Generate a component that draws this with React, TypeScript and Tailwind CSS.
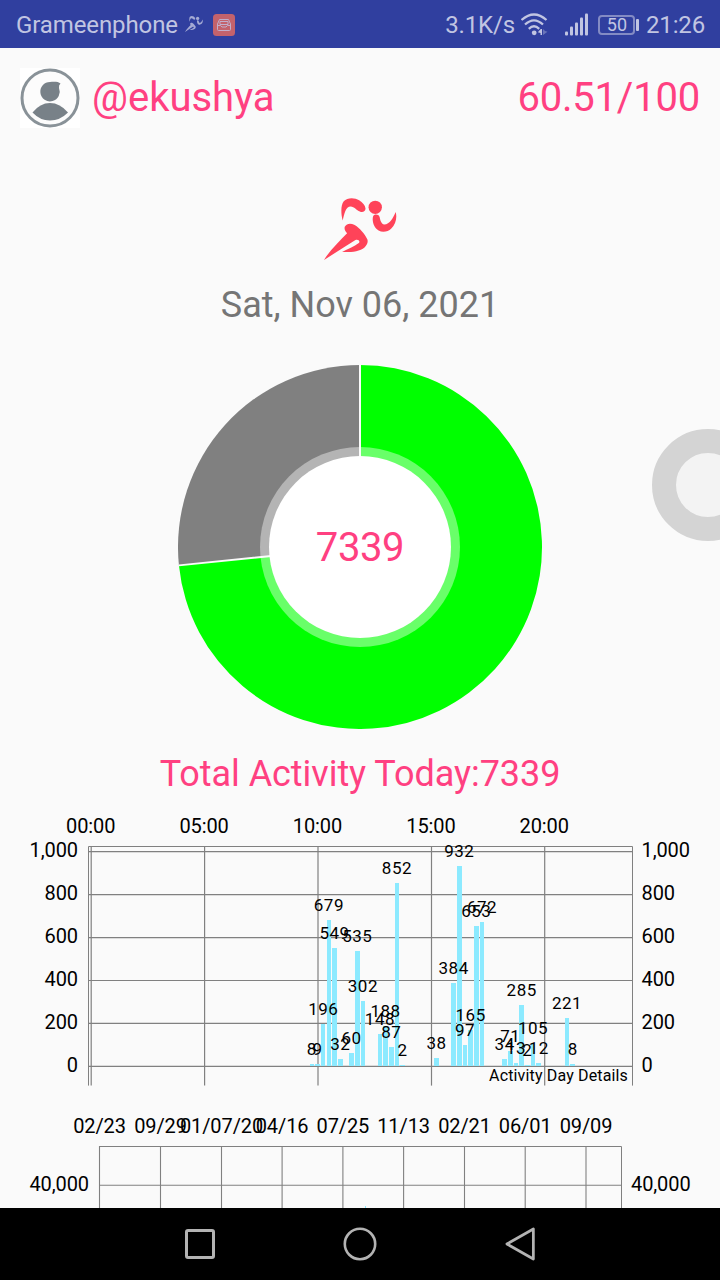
import React from 'react';

interface Bar {
  slot: number;
  value: number;
}

// one slot = 15 minutes, slot 0 = 00:00
const dayBars: Bar[] = [
  { slot: 39, value: 8 },
  { slot: 40, value: 9 },
  { slot: 41, value: 196 },
  { slot: 42, value: 679 },
  { slot: 43, value: 549 },
  { slot: 44, value: 32 },
  { slot: 46, value: 60 },
  { slot: 47, value: 535 },
  { slot: 48, value: 302 },
  { slot: 51, value: 148 },
  { slot: 52, value: 188 },
  { slot: 53, value: 87 },
  { slot: 54, value: 852 },
  { slot: 55, value: 2 },
  { slot: 61, value: 38 },
  { slot: 64, value: 384 },
  { slot: 65, value: 932 },
  { slot: 66, value: 97 },
  { slot: 67, value: 165 },
  { slot: 68, value: 653 },
  { slot: 69, value: 672 },
  { slot: 73, value: 34 },
  { slot: 74, value: 71 },
  { slot: 75, value: 13 },
  { slot: 76, value: 285 },
  { slot: 77, value: 2 },
  { slot: 78, value: 105 },
  { slot: 79, value: 12 },
  { slot: 84, value: 221 },
  { slot: 85, value: 8 },
];

const hourTicks = [
  { x: 91.2, label: '00:00' },
  { x: 204.6, label: '05:00' },
  { x: 318, label: '10:00' },
  { x: 431.5, label: '15:00' },
  { x: 544.7, label: '20:00' },
];

const stepTicks = [0, 200, 400, 600, 800, 1000];

const dateTicks = [
  { x: 99.5, label: '02/23' },
  { x: 160.5, label: '09/29' },
  { x: 221.5, label: '01/07/20' },
  { x: 282.1, label: '04/16' },
  { x: 342.9, label: '07/25' },
  { x: 403.6, label: '11/13' },
  { x: 464.5, label: '02/21' },
  { x: 525.2, label: '06/01' },
  { x: 586, label: '09/09' },
];

const ZERO_Y = 256.4;
const UNIT = 0.2147;

const barX = (slot: number) => 317.55 + (slot - 40) * 5.67;
const barTop = (value: number) => ZERO_Y - value * UNIT;

const Runner: React.FC<{ className: string }> = ({ className }) => (
  <svg viewBox="72 54 218 187" preserveAspectRatio="none" fill="currentColor" className={className}>
    <path d="M128 122C122 102 122 74 131 64C142 52 164 53 177 61C187 67 195 76 196 86C196 95 187 99 179 95C169 91 162 81 152 80C136 80 132 104 128 122Z" />
    <circle cx="225" cy="82" r="20" />
    <path d="M219 108C224 102 235 103 238 111C240 119 242 132 252 134C268 134 280 111 286 96C291 113 286 133 273 146C263 156 247 159 235 152C221 144 214 122 219 108Z" />
    <path d="M134 141C140 130 152 130 162 135C180 145 194 164 201 178C205 186 200 196 193 203C179 216 150 218 126 217C143 208 162 201 176 190C181 184 174 178 166 181L134 201L72 241C89 212 118 184 141 160C135 154 132 148 134 141Z" />
  </svg>
);

const StatusBar: React.FC = () => (
  <div className="h-12 bg-[#303f9f] text-[#c1c5e2] text-2xl leading-none flex items-center px-4">
    <span className="leading-[50px] mt-[2px] tracking-[-0.1px]">Grameenphone</span>
    <Runner className="w-[18px] h-4 ml-[7px] opacity-80" />
    <svg viewBox="0 0 22 22" className="w-[22px] h-[22px] ml-[10px] mt-[2px]">
      <rect width="22" height="22" rx="3.5" fill="#c3626c" />
      <g fill="none" stroke="#c1aecb" strokeWidth="1">
        <path d="M6.500 5.500H15.500L17.500 10V15.500Q17.500 16.500 16.500 16.500H5.500Q4.500 16.500 4.500 15.500V10Z" />
        <path d="M5 11.500H7.500L9 13H13L14.500 11.500H17M7 7.500H15V10.500H7Z" />
      </g>
    </svg>
    <span className="ml-auto leading-[50px] mt-[2px] tracking-[-0.15px]">3.1K/s</span>
    <svg viewBox="0 0 27 23" className="w-[27px] h-[23px] ml-[6px]">
      <g fill="none" stroke="currentColor" strokeWidth="2.3">
        <path d="M0.500 7Q13 -4 25.500 7" />
        <path d="M4 11.500Q13 3.200 22 11.500" />
        <path d="M7.800 15.800Q13 10.800 18.200 15.800" />
      </g>
      <circle cx="13.200" cy="19.800" r="2.400" fill="currentColor" />
      <path d="M21 16V22H19.500V20L16.800 19.200L19.800 16Z" fill="currentColor" />
      <path d="M22 16V22L26.500 18.700L24 18Z" fill="currentColor" opacity=".4" />
    </svg>
    <svg viewBox="0 0 24 23" className="w-6 h-[23px] ml-[17px]" fill="currentColor">
      <rect x="0" y="18.500" width="3" height="4" rx="1" />
      <rect x="5" y="13.500" width="3" height="9" rx="1" />
      <rect x="10" y="9.500" width="3" height="13" rx="1" />
      <rect x="15" y="4.500" width="3" height="18" rx="1" />
      <rect x="20" y="0.500" width="3" height="22" rx="1" />
    </svg>
    <div className="ml-[9px] mt-[2px] w-[37px] h-5 rounded-[4px] border-2 border-[#838bc4] flex items-center justify-center text-[18px] pl-px">
      50
    </div>
    <div className="ml-px mt-[2px] w-[3px] h-3 rounded-[1px] bg-[#c1c5e2]" />
    <span className="ml-[7px] mr-[-1px] leading-[50px] mt-[2px] tracking-[-0.15px]">21:26</span>
  </div>
);

const Avatar: React.FC = () => (
  <svg viewBox="0 0 60 60" className="w-[60px] h-[60px] bg-white">
    <circle cx="30" cy="30" r="28" fill="#fcfcfc" stroke="#899298" strokeWidth="3" />
    <path
      d="M40.500 15.500C38 13.200 33 13.700 30 14A9.700 9.700 0 1 0 39 20Q38.500 17 40.500 15.500Z"
      fill="#788188"
    />
    <path d="M12.500 44.500Q20 35 30 35Q40 35 48 44.500Q40 52.500 30 52.500Q20 52.500 12.500 44.500Z" fill="#788188" />
  </svg>
);

const GoalDonut: React.FC<{ steps: number; goal: number }> = ({ steps, goal }) => {
  const angle = (steps / goal) * 2 * Math.PI;
  const ex = 182 + 182 * Math.sin(angle);
  const ey = 182 - 182 * Math.cos(angle);

  return (
    <svg viewBox="0 0 364 364" className="w-[364px] h-[364px]">
      <path d={`M182 182V0A182 182 0 1 1 ${ex} ${ey}Z`} fill="#00ff00" />
      <path d={`M182 182L${ex} ${ey}A182 182 0 0 1 182 0Z`} fill="#808080" />
      <path d={`M182 0V182L${ex} ${ey}`} fill="none" stroke="#fafafa" strokeWidth="2" />
      <circle cx="182" cy="182" r="100" fill="#ffffff" fillOpacity=".41" />
      <circle cx="182" cy="182" r="91" fill="#ffffff" />
      <text x="182" y="196" textAnchor="middle" fontSize="40" letterSpacing="-.4" fill="#ff4081">
        {steps}
      </text>
    </svg>
  );
};

const DayChart: React.FC = () => (
  <svg viewBox="0 0 720 300" className="w-full h-[300px] shrink-0">
    <g stroke="#808080" strokeWidth="1.200">
      {hourTicks.map(t => (
        <line key={t.label} x1={t.x} x2={t.x} y1="36" y2="275.600" />
      ))}
      {stepTicks.map(v => (
        <line key={v} x1="88" x2="633" y1={barTop(v)} y2={barTop(v)} />
      ))}
    </g>
    <path d="M88.500 275.600V36.500H632.500V275.600" fill="none" stroke="#808080" />

    <g fill="#8ceaff" shapeRendering="crispEdges">
      {dayBars.map(b => {
        const top = Math.floor(barTop(b.value));
        return <rect key={b.slot} x={barX(b.slot) - 2.27} y={top} width="4.54" height={256 - top} />;
      })}
    </g>

    <g fontSize="17" letterSpacing=".5" textAnchor="middle">
      {dayBars.map(b => (
        <text key={b.slot} x={barX(b.slot)} y={Math.floor(barTop(b.value)) - 9}>
          {b.value}
        </text>
      ))}
    </g>

    <g fontSize="20" letterSpacing="-.1">
      {hourTicks.map(t => (
        <text key={t.label} x={t.x - 0.5} y="23" textAnchor="middle">
          {t.label}
        </text>
      ))}
      {stepTicks.map(v => (
        <React.Fragment key={v}>
          <text x="78" y={Math.floor(barTop(v) + 6)} textAnchor="end">
            {v.toLocaleString('en-US')}
          </text>
          <text x="641.500" y={Math.floor(barTop(v) + 6)}>
            {v.toLocaleString('en-US')}
          </text>
        </React.Fragment>
      ))}
    </g>
    <text x="628" y="271" fontSize="16" letterSpacing=".15" textAnchor="end">
      Activity Day Details
    </text>
  </svg>
);

const HistoryChart: React.FC = () => (
  <svg viewBox="0 0 720 98" className="w-full h-[98px] shrink-0">
    <g stroke="#808080" strokeWidth="1.100">
      {dateTicks.map(t => (
        <line key={t.label} x1={t.x} x2={t.x} y1="36" y2="98" />
      ))}
      <line x1="99" x2="622" y1="75.300" y2="75.300" />
    </g>
    <path d="M99.500 98V36.500H621.500V98" fill="none" stroke="#808080" />
    <rect x="365" y="96" width="1" height="2" fill="#8ceaff" />
    <g fontSize="20" letterSpacing="-.1">
      {dateTicks.map(t => (
        <text key={t.label} x={t.x} y="23" textAnchor="middle">
          {t.label}
        </text>
      ))}
      <text x="89" y="81" textAnchor="end">
        40,000
      </text>
      <text x="631" y="81">
        40,000
      </text>
    </g>
  </svg>
);

const NavBar: React.FC = () => (
  <div className="h-[72px] bg-black text-[#b3b3b3] flex items-center justify-center gap-[124px]">
    <svg viewBox="0 0 36 36" className="w-9 h-9" fill="none" stroke="currentColor" strokeWidth="3">
      <rect x="4.500" y="4.500" width="27" height="27" rx="1.500" />
    </svg>
    <svg viewBox="0 0 36 36" className="w-9 h-9" fill="none" stroke="currentColor" strokeWidth="2.600">
      <circle cx="18" cy="18" r="15.200" />
    </svg>
    <svg viewBox="0 0 36 36" className="w-9 h-9" fill="none" stroke="currentColor" strokeWidth="2.800" strokeLinejoin="round">
      <path d="M5 18L32 3V33Z" transform="translate(0 0) scale(.98 1)" />
    </svg>
  </div>
);

const App: React.FC = () => {
  const steps = 7339;

  return (
    <div className="relative w-[720px] h-[1280px] overflow-hidden bg-[#fafafa] font-['Roboto',sans-serif] flex flex-col">
      <StatusBar />
      <main className="flex-1 min-h-0 overflow-hidden flex flex-col items-center">
        <header className="w-full p-5 flex items-center text-[40px] leading-[60px] text-[#ff4081]">
          <Avatar />
          <span className="ml-3">@ekushya</span>
          <span className="ml-auto tracking-[-0.2px]">60.51/100</span>
        </header>
        <Runner className="mt-[50px] ml-px w-[73px] h-[62px] shrink-0 text-[#ff4359]" />
        <p className="mt-5 h-[50px] leading-[50px] text-4xl text-[#757575]">Sat, Nov 06, 2021</p>
        <div className="mt-[35px] shrink-0">
          <GoalDonut steps={steps} goal={10000} />
        </div>
        <p className="h-[81px] shrink-0 leading-[90px] text-4xl tracking-[-0.05px] text-[#ff4081]">
          Total Activity Today:{steps}
        </p>
        <DayChart />
        <HistoryChart />
      </main>
      <NavBar />

      {/* floating assist button, half off screen */}
      <div className="absolute left-[652px] top-[429px] w-28 h-28 rounded-full border-[24px] border-[#d4d4d4] bg-[#f3f3f3]" />
    </div>
  );
};

export default App;
